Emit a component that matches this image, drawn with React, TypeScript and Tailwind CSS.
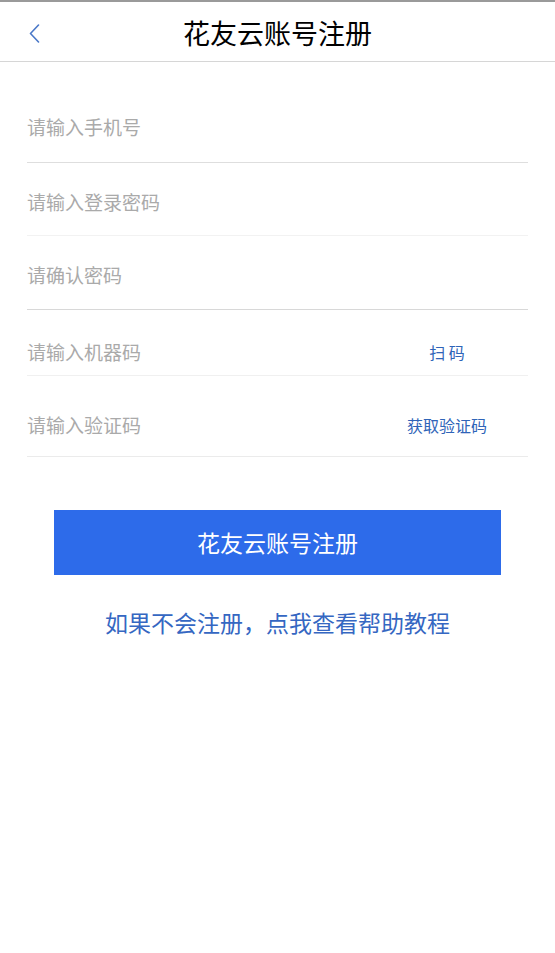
import React from "react";

const FONT = '"Noto Sans CJK SC", "Noto Sans", sans-serif';

type Row = {
  placeholder: string;
  h: string;
  pad: string;
  line: string;
  action?: string;
};

const ROWS: Row[] = [
  { placeholder: "请输入手机号", h: "h-[68px]", pad: "pb-[4px]", line: "border-[#dedede]" },
  { placeholder: "请输入登录密码", h: "h-[73px]", pad: "pt-[5px]", line: "border-[#f2f2f2]" },
  { placeholder: "请确认密码", h: "h-[74px]", pad: "pt-[4px]", line: "border-[#d8d8d8]" },
  { placeholder: "请输入机器码", h: "h-[66px]", pad: "pt-[18px]", line: "border-[#f0f0f0]", action: "扫 码" },
  { placeholder: "请输入验证码", h: "h-[81px]", pad: "pt-[17px]", line: "border-[#ebebeb]", action: "获取验证码" },
];

export default function App() {
  return (
    <div className="w-[555px] h-[953px] bg-white overflow-hidden" style={{ fontFamily: FONT }}>
      <div className="h-[2px] bg-[#9a9a9a]" />
      {/* header */}
      <div className="relative h-[60px] flex items-center justify-center border-b border-[#d6d6d6]">
        <button className="absolute left-[27px] top-[20px] w-[14px] h-[22px] flex items-center justify-center">
          <svg width="11" height="19" viewBox="0 0 11 19" fill="none">
            <path d="M9.5 1 L1.5 9.5 L9.5 18" stroke="#4a78c8" strokeWidth="1.6" strokeLinecap="round" strokeLinejoin="round" />
          </svg>
        </button>
        <span className="text-[27px] leading-none text-black mt-[1px]">花友云账号注册</span>
      </div>

      {/* form */}
      <div className="pt-[33px] px-[27px]">
        {ROWS.map((r) => (
          <div key={r.placeholder} className={`flex items-center border-b ${r.h} ${r.pad} ${r.line}`}>
            <input
              className="flex-1 min-w-0 bg-transparent outline-none text-[19px] leading-none text-[#333] placeholder:text-[#aaaaaa]"
              placeholder={r.placeholder}
              style={{ fontFamily: FONT }}
            />
            {r.action && (
              <span className="w-[120px] mr-[21px] text-center text-[16px] leading-none text-[#2f64b8] whitespace-pre">
                {r.action}
              </span>
            )}
          </div>
        ))}
      </div>

      {/* submit */}
      <div className="px-[54px] pt-[53px]">
        <button className="w-full h-[65px] bg-[#2d6bea] text-white text-[23px] leading-none flex items-center justify-center">
          花友云账号注册
        </button>
      </div>

      <div className="mt-[36px] text-center text-[23px] leading-none text-[#3567c2]">
        如果不会注册，点我查看帮助教程
      </div>
    </div>
  );
}
